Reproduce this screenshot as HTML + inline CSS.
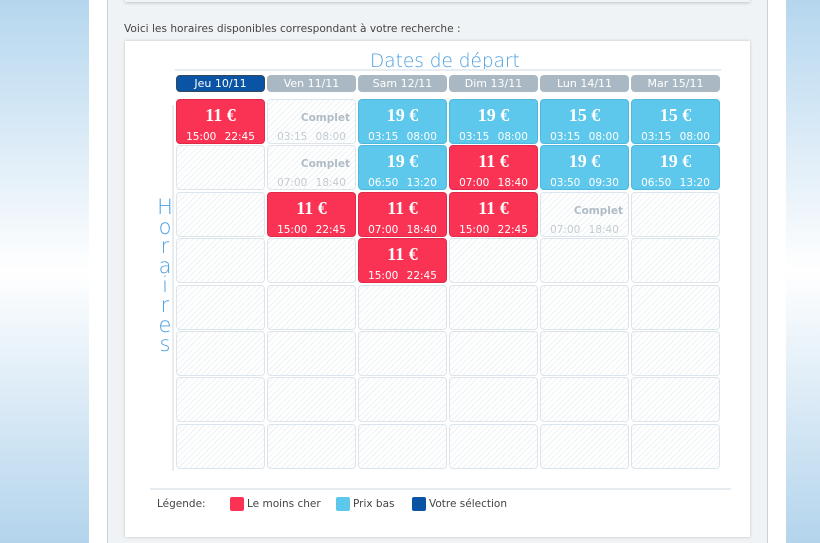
<!DOCTYPE html>
<html><head><meta charset="utf-8"><style>
*{margin:0;padding:0;box-sizing:border-box}
body{width:820px;height:543px;overflow:hidden;position:relative;font-family:"DejaVu Sans",sans-serif;background:linear-gradient(#b5d6ee 0%,#ffffff 50%,#b3d4ec 100%)}
.page{position:absolute;left:89px;top:0;width:697px;height:543px;background:#fff}
.gray{position:absolute;left:107px;top:0;width:661px;height:543px;background:#f0f3f5;border-left:1px solid #c9d0d6;border-right:1px solid #c9d0d6}
.topbox{position:absolute;left:125px;top:-5px;width:625px;height:7px;background:#f0f3f5;box-shadow:0 1px 3px rgba(0,0,0,.2)}
.intro{position:absolute;left:124px;top:23px;font-size:10.6px;color:#444}
.panel{position:absolute;left:125px;top:41px;width:625px;height:496px;background:#fff;box-shadow:0 0 3px rgba(0,0,0,.2)}
.title{position:absolute;left:370px;width:148px;text-align:center;top:51px;font-size:18.5px;color:#4a9ee0;font-family:"DejaVu Sans",sans-serif;font-weight:200;white-space:nowrap}
.hl{position:absolute;left:175px;top:69px;width:546px;height:2px;background:#e6ecf0}
.tab{position:absolute;top:75px;width:89px;height:17px;border-radius:4px;background:#a9b8c2;color:#fff;font-size:11px;text-align:center;line-height:17px}
.tab.sel{background:#0a54a5;border:1px solid #33485a;line-height:15px}
.c{position:absolute;width:89px;height:45px;border-radius:4px;border:1px solid #dce5eb;background:repeating-linear-gradient(135deg,#fff 0 3px,#eef2f5 3px 4px)}
.r{background:#fa3354;border-color:#e02a49;color:#fff}
.b{background:#5ec8ec;border-color:#50b8dc;color:#fff}
.p{position:absolute;top:5px;width:100%;text-align:center;font:bold 18px "Liberation Serif",serif}
.t{position:absolute;top:31px;left:0;width:100%;text-align:center;font-size:10.5px;word-spacing:5px}
.cp{position:absolute;top:12px;right:5px;font:bold 10.5px "DejaVu Sans",sans-serif;color:#b0bcc6}
.tc{position:absolute;top:31px;left:0;width:100%;text-align:center;font-size:10.5px;word-spacing:5px;color:#c3ccd3}
.vl{position:absolute;left:172px;top:105px;width:2px;height:366px;background:#e6ecf0}
.hor{position:absolute;left:155px;top:198px;width:20px;text-align:center;font-size:21px;line-height:19.6px;color:#4a9ee0;font-family:"DejaVu Sans",sans-serif;font-weight:200}
.ll{position:absolute;left:150px;top:488px;width:581px;height:2px;background:#e6ecf0}
.leg{position:absolute;top:498px;font-size:10.5px;color:#444}
.sw{position:absolute;top:497px;width:14px;height:14px;border-radius:2px}
</style></head><body>
<div class="page"></div><div class="gray"></div><div class="topbox"></div>
<div class="intro">Voici les horaires disponibles correspondant à votre recherche :</div>
<div class="panel"></div>
<div class="title">Dates de départ</div>
<div class="hl"></div>
<div class="tab sel" style="left:176px">Jeu 10/11</div>
<div class="tab" style="left:267px">Ven 11/11</div>
<div class="tab" style="left:358px">Sam 12/11</div>
<div class="tab" style="left:449px">Dim 13/11</div>
<div class="tab" style="left:540px">Lun 14/11</div>
<div class="tab" style="left:631px">Mar 15/11</div>
<div class="vl"></div>
<div class="hor">H<br>o<br>r<br>a<br>i<br>r<br>e<br>s</div>
<div id="grid"></div>
<div class="ll"></div>
<div class="leg" style="left:157px">Légende:</div>
<div class="sw" style="left:230px;background:#fa3354"></div><div class="leg" style="left:247px">Le moins cher</div>
<div class="sw" style="left:336px;background:#5ec8ec"></div><div class="leg" style="left:353px">Prix bas</div>
<div class="sw" style="left:412px;background:#0a54a5"></div><div class="leg" style="left:429px">Votre sélection</div>
<script>
var d=[
[['r','11 €','15:00 22:45'],['c','','03:15 08:00'],['b','19 €','03:15 08:00'],['b','19 €','03:15 08:00'],['b','15 €','03:15 08:00'],['b','15 €','03:15 08:00']],
[0,['c','','07:00 18:40'],['b','19 €','06:50 13:20'],['r','11 €','07:00 18:40'],['b','19 €','03:50 09:30'],['b','19 €','06:50 13:20']],
[0,['r','11 €','15:00 22:45'],['r','11 €','07:00 18:40'],['r','11 €','15:00 22:45'],['c','','07:00 18:40'],0],
[0,0,['r','11 €','15:00 22:45'],0,0,0],[0,0,0,0,0,0],[0,0,0,0,0,0],[0,0,0,0,0,0],[0,0,0,0,0,0]];
var h='';
for(var r=0;r<8;r++)for(var i=0;i<6;i++){var x=176+i*91,y=Math.round(99+r*46.4),c=d[r][i];
var st='left:'+x+'px;top:'+y+'px';
if(!c)h+='<div class="c" style="'+st+'"></div>';
else if(c[0]=='c')h+='<div class="c" style="'+st+'"><div class="cp">Complet</div><div class="tc">'+c[2]+'</div></div>';
else h+='<div class="c '+c[0]+'" style="'+st+'"><div class="p">'+c[1]+'</div><div class="t">'+c[2]+'</div></div>';}
document.getElementById('grid').innerHTML=h;
</script>
</body></html>
